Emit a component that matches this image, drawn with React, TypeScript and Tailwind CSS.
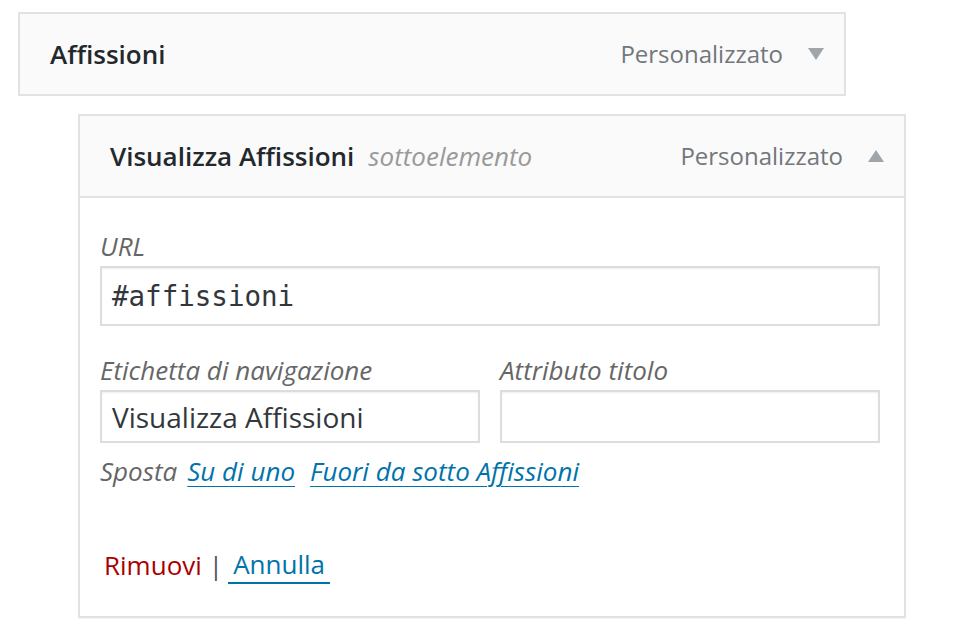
import React from "react";

const Down = () => (
  <svg width="16" height="12" viewBox="0 0 16 12" className="block">
    <polygon points="0,0 16,0 8,12" fill="#a0a5aa" />
  </svg>
);
const Up = () => (
  <svg width="16" height="12" viewBox="0 0 16 12" className="block">
    <polygon points="0,12 16,12 8,0" fill="#a0a5aa" />
  </svg>
);

export default function App() {
  return (
    <div
      className="min-h-[638px] w-[958px] bg-white pl-[18px] pt-[12px]"
      style={{ fontFamily: '"Open Sans", "Noto Sans", sans-serif' }}
    >
      <div className="flex h-[84px] w-[828px] items-center justify-between border-2 border-[#e2e2e2] bg-[#fafafa] pl-[30px] pr-[20px]">
        <span className="text-[26px] font-semibold leading-[36px] text-[#23282d]">Affissioni</span>
        <div className="flex items-center gap-[25px]">
          <span className="text-[24px] leading-[36px] text-[#72777c]">Personalizzato</span>
          <Down />
        </div>
      </div>

      <div className="ml-[60px] mt-[18px] w-[828px] border-2 border-[#e2e2e2] shadow-[0_1px_1px_rgba(0,0,0,0.04)]">
        <div className="flex h-[82px] items-center justify-between border-b-2 border-[#e2e2e2] bg-[#fafafa] pl-[30px] pr-[20px]">
          <div className="flex items-baseline gap-[14px]">
            <span className="text-[26px] font-semibold leading-[36px] text-[#23282d]">Visualizza Affissioni</span>
            <span className="text-[26px] italic leading-[36px] text-[#999]">sottoelemento</span>
          </div>
          <div className="flex items-center gap-[25px]">
            <span className="text-[24px] leading-[36px] text-[#72777c]">Personalizzato</span>
            <Up />
          </div>
        </div>

        <div className="bg-white pb-[32px] pl-[20px] pr-[23px] pt-[30px]">
          <div className="text-[26px] italic leading-[36px] text-[#666]">URL</div>
          <div className="mt-[2px] flex h-[60px] w-[780px] items-center border-2 border-[#ddd] px-[10px] shadow-[inset_0_1px_2px_rgba(0,0,0,0.07)]">
            <span
              className="text-[27.5px] leading-[36px] text-[#32373c]"
              style={{ fontFamily: '"DejaVu Sans Mono", monospace' }}
            >
              #affissioni
            </span>
          </div>

          <div className="mt-[26px] flex gap-[20px]">
            <div className="w-[380px]">
              <div className="text-[26px] italic leading-[36px] text-[#666]">Etichetta di navigazione</div>
              <div className="mt-[2px] flex h-[53px] items-center border-2 border-[#ddd] px-[10px] shadow-[inset_0_1px_2px_rgba(0,0,0,0.07)]">
                <span className="text-[28px] leading-[36px] text-[#32373c]">Visualizza Affissioni</span>
              </div>
            </div>
            <div className="w-[380px]">
              <div className="text-[26px] italic leading-[36px] text-[#666]">Attributo titolo</div>
              <div className="mt-[2px] h-[53px] border-2 border-[#ddd] shadow-[inset_0_1px_2px_rgba(0,0,0,0.07)]" />
            </div>
          </div>

          <div className="mt-[10px] flex items-baseline text-[26px] italic leading-[36px]">
            <span className="text-[#666]">Sposta</span>
            <span className="ml-[10px] text-[#0073aa] underline decoration-1 underline-offset-[5px]">Su di uno</span>
            <span className="ml-[15px] text-[#0073aa] underline decoration-1 underline-offset-[5px]">Fuori da sotto Affissioni</span>
          </div>

          <div className="ml-[4px] mt-[57px] flex items-center text-[26px] leading-[36px]">
            <span className="text-[#a00]">Rimuovi</span>
            <span className="ml-[7px] text-[#555]">|</span>
            <span className="ml-[5px] border-b-2 border-[#0073aa] px-[5px] text-[#0073aa]">Annulla</span>
          </div>
        </div>
      </div>
    </div>
  );
}
